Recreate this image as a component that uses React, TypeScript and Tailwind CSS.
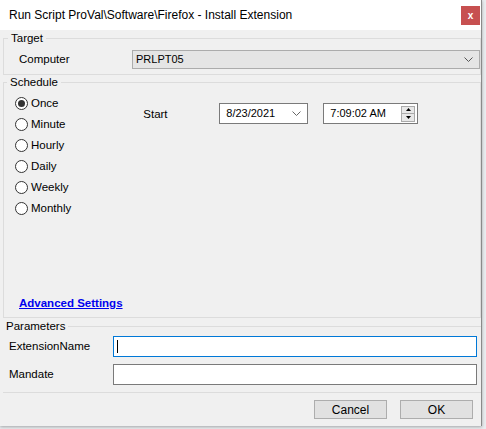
import React from 'react';

const font = { fontFamily: '"Segoe UI", "Liberation Sans", Arial, sans-serif' };

const schedules = ['Once', 'Minute', 'Hourly', 'Daily', 'Weekly', 'Monthly'];

function Radio({ label, checked }: { label: string; checked?: boolean }) {
  return (
    <div className="flex h-[21px] items-center">
      <span className="flex h-[13px] w-[13px] items-center justify-center rounded-full border border-[#333] bg-white">
        {checked && <span className="h-[7px] w-[7px] rounded-full bg-[#333]" />}
      </span>
      <span className="ml-[3px]">{label}</span>
    </div>
  );
}

export default function App() {
  return (
    <div className="flex h-[429px] w-[486px] bg-[#e9ecef] text-[11.5px] text-black" style={font}>
      <div className="flex h-[426px] w-[482px] flex-col border-r border-[#8a8a8a] shadow-[0_1px_3px_rgba(0,0,0,0.3)]">
        {/* Title bar */}
        <div className="flex h-[30px] items-center justify-between bg-white pl-[9px] pr-[1px]">
          <span className="text-[12px]">Run Script ProVal\Software\Firefox - Install Extension</span>
          <div className="flex h-[19px] w-[19px] items-center justify-center bg-[#c75050] text-[10px] font-bold text-white">
            x
          </div>
        </div>

        <div className="flex flex-1 flex-col bg-[#f0f0f0] pl-[3px]">
          {/* Target */}
          <fieldset className="mt-[1px] h-[44px] border border-[#dcdcdc] pl-[4px]">
            <legend className="px-[3px] leading-[14px]">Target</legend>
            <div className="flex items-center pl-[11px] pt-[5px]">
              <span className="w-[113px]">Computer</span>
              <div className="flex h-[19px] w-[348px] items-center justify-between border border-[#acacac] bg-[#e5e5e5] pl-[3px] pr-[6px] text-[11px]">
                <span>PRLPT05</span>
                <svg width="9" height="6" viewBox="0 0 9 6" fill="none" stroke="#555">
                  <path d="M0.5 0.5 L4.5 4.5 L8.5 0.5" />
                </svg>
              </div>
            </div>
          </fieldset>

          {/* Schedule */}
          <fieldset className="h-[243px] border border-[#dcdcdc] pl-[8px]">
            <legend className="-ml-[5px] px-[3px] leading-[14px]">Schedule</legend>
            <div className="flex">
              <div className="flex flex-col pl-[3px] pt-[4px]">
                {schedules.map((s) => (
                  <Radio key={s} label={s} checked={s === 'Once'} />
                ))}
              </div>
              <div className="ml-[72px] flex items-start pt-[14px]">
                <span className="mt-[3px] w-[76px]">Start</span>
                <div className="flex h-[21px] w-[89px] items-center justify-between border border-[#7a7a7a] bg-white pl-[6px] pr-[6px] text-[11px]">
                  <span>8/23/2021</span>
                  <svg width="9" height="6" viewBox="0 0 9 6" fill="none" stroke="#666">
                    <path d="M0.5 0.5 L4.5 4.5 L8.5 0.5" />
                  </svg>
                </div>
                <div className="ml-[15px] flex h-[21px] w-[95px] items-center justify-between border border-[#7a7a7a] bg-white pl-[6px] pr-[2px] text-[11px]">
                  <span>7:09:02 AM</span>
                  <div className="flex flex-col">
                    <div className="flex h-[8px] w-[14px] items-center justify-center border border-[#aaa] bg-[#e8e8e8]">
                      <svg width="5" height="3" viewBox="0 0 5 3"><path d="M2.5 0 L5 3 L0 3 Z" fill="#000" /></svg>
                    </div>
                    <div className="flex h-[8px] w-[14px] items-center justify-center border border-t-0 border-[#aaa] bg-[#e8e8e8]">
                      <svg width="5" height="3" viewBox="0 0 5 3"><path d="M0 0 L5 0 L2.5 3 Z" fill="#000" /></svg>
                    </div>
                  </div>
                </div>
              </div>
            </div>
            <div className="mt-[76px] pl-[7px]">
              <a className="font-bold text-[#0000ee] underline">Advanced Settings</a>
            </div>
          </fieldset>

          {/* Parameters */}
          <fieldset className="mt-[1px] h-[74px] border-t border-b border-[#dcdcdc] pl-[3px]">
            <legend className="-ml-[3px] px-[3px] leading-[14px]">Parameters</legend>
            <div className="flex items-center pt-[3px]">
              <span className="w-[107px] pl-[3px]">ExtensionName</span>
              <div className="flex h-[21px] w-[364px] items-center border border-[#0078d7] bg-white pl-[3px]">
                <span className="h-[13px] w-[1px] bg-black" />
              </div>
            </div>
            <div className="mt-[7px] flex items-center">
              <span className="w-[107px] pl-[3px]">Mandate</span>
              <div className="h-[21px] w-[364px] border border-[#7a7a7a] bg-white" />
            </div>
          </fieldset>

          {/* Buttons */}
          <div className="flex justify-end gap-[13px] pr-[8px] pt-[7px]">
            <button className="h-[19px] w-[73px] border border-[#adadad] bg-[#e1e1e1] text-[12px]">Cancel</button>
            <button className="h-[19px] w-[73px] border border-[#adadad] bg-[#e1e1e1] text-[12px]">OK</button>
          </div>
        </div>
      </div>
    </div>
  );
}
